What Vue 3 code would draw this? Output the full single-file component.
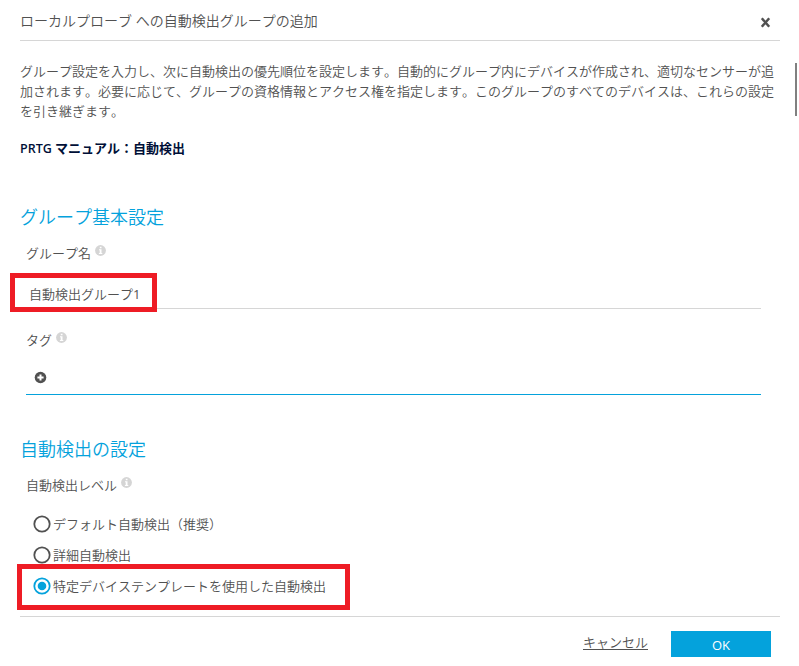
<script setup>
import { ref } from 'vue'

const introLines = [
  'グループ設定を入力し、次に自動検出の優先順位を設定します。自動的にグループ内にデバイスが作成され、適切なセンサーが追',
  '加されます。必要に応じて、グループの資格情報とアクセス権を指定します。このグループのすべてのデバイスは、これらの設定',
  'を引き継ぎます。',
]
const levels = [
  'デフォルト自動検出（推奨）',
  '詳細自動検出',
  '特定デバイステンプレートを使用した自動検出',
]
const selected = ref(2)
</script>

<template>
  <div class="dialog">
    <header class="head">
      <h1>ローカルプローブ への自動検出グループの追加</h1>
      <button class="close">
        <svg width="11" height="11" viewBox="0 0 11 11"><path d="M1.8 1.2 9.2 9.8M9.2 1.2 1.8 9.8" /></svg>
      </button>
    </header>

    <main class="body">
      <p class="intro"><span v-for="l in introLines" :key="l">{{ l }}</span></p>
      <a class="manual"><span class="latin">PRTG</span>マニュアル：自動検出</a>

      <h2>グループ基本設定</h2>
      <div class="label">グループ名
        <svg class="info" viewBox="0 0 11 11"><circle cx="5.5" cy="5.5" r="5.4" /><path d="M4.8 1.7h1.7v1.5H4.8zM4 4.3h2.5v3.6h.8v1H3.9v-1h.8V5.3H4z" /></svg>
      </div>
      <div class="field">自動検出グループ<span class="digit">1</span><i class="mark mark-name"></i></div>

      <div class="label tag-label">タグ
        <svg class="info" viewBox="0 0 11 11"><circle cx="5.5" cy="5.5" r="5.4" /><path d="M4.8 1.7h1.7v1.5H4.8zM4 4.3h2.5v3.6h.8v1H3.9v-1h.8V5.3H4z" /></svg>
      </div>
      <div class="tags">
        <svg width="13" height="13" viewBox="0 0 13 13"><circle cx="6.5" cy="6.5" r="5.8" fill="#515151" /><path d="M6.5 3.4v6.2M3.4 6.5h6.2" stroke="#fff" stroke-width="2" /></svg>
      </div>

      <h2 class="second">自動検出の設定</h2>
      <div class="label">自動検出レベル
        <svg class="info" viewBox="0 0 11 11"><circle cx="5.5" cy="5.5" r="5.4" /><path d="M4.8 1.7h1.7v1.5H4.8zM4 4.3h2.5v3.6h.8v1H3.9v-1h.8V5.3H4z" /></svg>
      </div>
      <div class="options">
        <div v-for="(t, i) in levels" :key="t" class="option" @click="selected = i">
          <svg class="radio" :class="{ on: selected === i }" viewBox="0 0 18 18">
            <circle class="ring" cx="9" cy="9" r="7.7" />
            <circle v-if="selected === i" class="dot" cx="9" cy="9" r="4.3" />
          </svg>
          <span>{{ t }}</span>
          <i v-if="i === 2" class="mark mark-level"></i>
        </div>
      </div>
    </main>

    <footer class="foot">
      <a class="cancel">キャンセル</a>
      <button class="ok">OK</button>
    </footer>
    <i class="scroll"></i>
  </div>
</template>

<style>
body { background: #fff; }
</style>

<style scoped>
.dialog {
  position: relative;
  box-sizing: border-box;
  width: 799px;
  height: 666px;
  padding: 0 19px 0 20px;
  overflow: hidden;
  display: flex;
  flex-direction: column;
  background: #fff;
  color: #515151;
  font: 13px/20px "Open Sans", "Noto Sans CJK JP", sans-serif;
  font-weight: 350;
  font-kerning: none;
  white-space: nowrap;
}
.head {
  height: 40px;
  flex: none;
  display: flex;
  justify-content: space-between;
  border-bottom: 1px solid #d6d6d6;
}
h1 {
  margin: 0;
  font-size: 14px;
  line-height: 42px;
  height: 40px;
  font-weight: 350;
}
button { border: 0; padding: 0; font: inherit; }
.close { display: flex; background: none; padding: 17px 9px 0 0; }
.close path { stroke: #515151; stroke-width: 2.5; fill: none; }
.body { height: 575px; flex: none; border-bottom: 1px solid #d6d6d6; }
.intro { margin: 0; padding-top: 20px; }
.intro span { display: block; }
.manual {
  display: flex;
  gap: 4px;
  margin-top: 17px;
  color: #000f37;
  font-weight: 700;
}
.latin { width: 31px; font-size: 12.5px; font-weight: 550; line-height: 22px; height: 20px; }
h2 {
  margin: 45px 0 0;
  font-size: 18px;
  line-height: 28px;
  font-weight: 350;
  color: #04a2dc;
}
.label { display: flex; gap: 4px; height: 20px; padding-left: 6px; margin-top: 12px; }
.info { width: 11px; height: 11px; margin-top: 2px; }
.info circle { fill: #d5d5d5; }
.info path { fill: #fff; }
.field {
  position: relative;
  box-sizing: border-box;
  width: 735px;
  height: 36px;
  margin: 10px 0 0 6px;
  padding: 11px 0 0 3px;
  border-bottom: 1px solid #d6d6d6;
}
.digit { font-weight: 400; }
.mark { position: absolute; box-sizing: border-box; border: 5px solid #ee1c25; }
.mark-name { left: -16px; top: 0; width: 147px; height: 39px; }
.tag-label { margin-top: 21px; }
.tags {
  box-sizing: border-box;
  display: flex;
  width: 735px;
  height: 35px;
  margin: 10px 0 0 6px;
  padding: 11px 0 0 8px;
  border-bottom: 1px solid #04a2dc;
}
h2.second { margin-top: 40px; }
.options { margin-top: 13px; padding-left: 13px; }
.option { position: relative; display: flex; align-items: center; gap: 2px; height: 31px; }
.radio { width: 18px; height: 18px; }
.ring { fill: none; stroke: #515151; stroke-width: 1.8; }
.on .ring { stroke: #04a2dc; }
.dot { fill: #04a2dc; }
.mark-level { left: -16px; top: -6px; width: 333px; height: 46px; }
.foot { display: flex; justify-content: flex-end; gap: 23px; padding: 14px 9px 0 0; }
.cancel { height: 20px; margin-top: 1px; text-decoration: underline; text-underline-offset: 2px; }
.ok { width: 100px; height: 26px; padding-top: 2px; background: #04a2dc; color: #fff; font-weight: 400; }
.scroll { position: absolute; left: 795px; top: 63px; width: 2px; height: 53px; background: #808080; }
</style>
